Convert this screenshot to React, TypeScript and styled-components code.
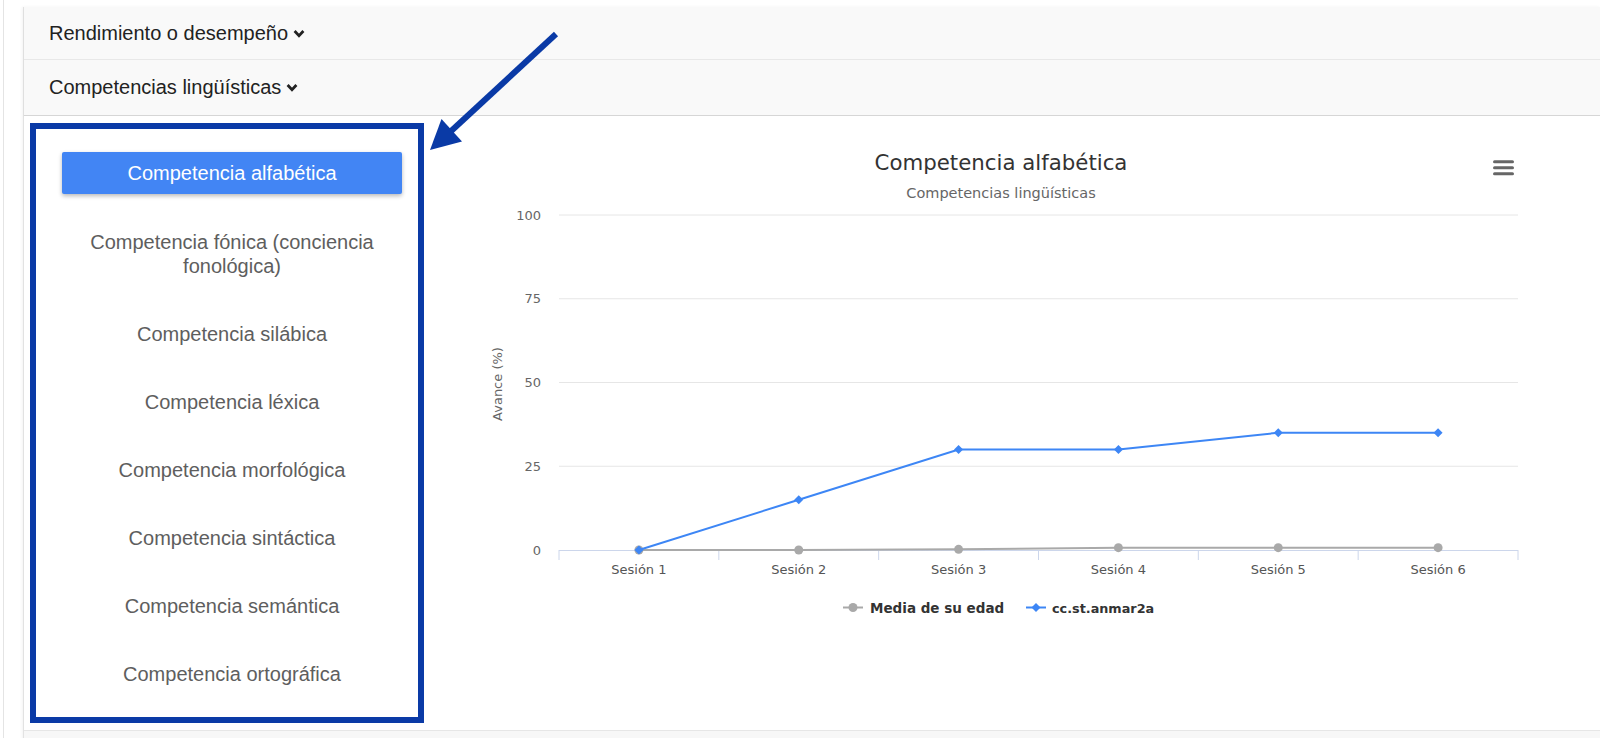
import React from "react";
import styled, { createGlobalStyle } from "styled-components";

const GlobalStyle = createGlobalStyle`
  html, body {
    margin: 0;
    padding: 0;
    background: #ffffff;
  }
  body {
    font-family: "Liberation Sans", Arial, sans-serif;
    overflow: hidden;
  }
`;

const Page = styled.div`
  position: relative;
  width: 1600px;
  height: 738px;
  overflow: hidden;
`;

const Frame = styled.div`
  margin-left: 3px;
  padding: 7px 0 0 19px;
  height: 100%;
  box-sizing: border-box;
  border-left: 1px solid #e4e4e4;
`;

const Panel = styled.section`
  border-left: 1px solid #e2e2e2;
  box-shadow: -1px 0 3px rgba(0, 0, 0, 0.05);
  background: #fff;
`;

const Header = styled.div<{ h: number; strong?: boolean }>`
  height: ${(p) => p.h}px;
  box-sizing: border-box;
  display: flex;
  align-items: center;
  gap: 5px;
  padding-left: 25px;
  background: #f9f9f9;
  border-bottom: 1px solid ${(p) => (p.strong ? "#d6d6d6" : "#e8e8e8")};
  box-shadow: 0 1px 2px rgba(0, 0, 0, 0.04);
  font-size: 20px;
  color: #222;
`;

const Body = styled.div`
  position: relative;
  height: 614px;
  display: flex;
  background: #fff;
`;

const Footer = styled.div`
  height: 20px;
  background: #f7f7f7;
  border-top: 1px solid #e6e6e6;
`;

const Nav = styled.ul`
  list-style: none;
  margin: 0 0 0 23px;
  padding: 36px 0 0;
  width: 370px;
  flex-shrink: 0;
`;

const NavItem = styled.li<{ active?: boolean }>`
  text-align: center;
  font-size: 20px;
  line-height: 24px;
  color: ${(p) => (p.active ? "#fff" : "#5e5e5e")};
  background: ${(p) => (p.active ? "#4285f4" : "transparent")};
  padding: ${(p) => (p.active ? "9px 10px" : "22px 40px")};
  margin: ${(p) => (p.active ? "0 15px 14px" : "0")};
  border-radius: ${(p) => (p.active ? "2px" : "0")};
  box-shadow: ${(p) => (p.active ? "0 2px 4px rgba(0,0,0,0.28)" : "none")};
`;

const Highlight = styled.div`
  position: absolute;
  left: 6px;
  top: 7px;
  width: 394px;
  height: 600px;
  box-sizing: border-box;
  border: 6px solid #0a3aa6;
  pointer-events: none;
`;

const ChartBox = styled.div`
  flex: 1;
  svg {
    display: block;
    font-family: "DejaVu Sans", "Lucida Grande", sans-serif;
  }
`;

const Annotation = styled.svg`
  position: absolute;
  left: 0;
  top: 0;
  pointer-events: none;
`;

const Chevron = () => (
  <svg width="12" height="9" viewBox="0 0 12 9">
    <polyline
      points="1.6,2 6,6.6 10.4,2"
      fill="none"
      stroke="#222"
      strokeWidth="2.8"
    />
  </svg>
);

const items = [
  "Competencia alfabética",
  "Competencia fónica (conciencia fonológica)",
  "Competencia silábica",
  "Competencia léxica",
  "Competencia morfológica",
  "Competencia sintáctica",
  "Competencia semántica",
  "Competencia ortográfica",
];

const plot = { left: 142, right: 1101, top: 99, bottom: 434 };
const catW = (plot.right - plot.left) / 6;
const cx = (i: number) => plot.left + catW * (i + 0.5);
const cy = (v: number) => plot.bottom - (v / 100) * (plot.bottom - plot.top);

const media = [0, 0, 0.2, 0.7, 0.7, 0.7];
const alumno = [0, 15, 30, 30, 35, 35];

const line = (data: number[]) =>
  data.map((v, i) => `${i ? "L" : "M"}${cx(i)},${cy(v)}`).join(" ");

const diamond = (x: number, y: number, r = 4.5) =>
  `${x},${y - r} ${x + r},${y} ${x},${y + r} ${x - r},${y}`;

function Chart() {
  const ticks = [0, 25, 50, 75, 100];
  return (
    <svg width="1183" height="600">
      <text x="584" y="54" textAnchor="middle" fontSize="21.3" fill="#333">
        Competencia alfabética
      </text>
      <text x="584" y="82" textAnchor="middle" fontSize="14.5" fill="#666">
        Competencias lingüísticas
      </text>

      <g stroke="#666" strokeWidth="3" strokeLinecap="round">
        <line x1="1077.5" y1="45.7" x2="1095.5" y2="45.7" />
        <line x1="1077.5" y1="51.7" x2="1095.5" y2="51.7" />
        <line x1="1077.5" y1="57.7" x2="1095.5" y2="57.7" />
      </g>

      {ticks.map((t) => (
        <g key={t}>
          {t > 0 && (
            <line
              x1={plot.left}
              x2={plot.right}
              y1={cy(t)}
              y2={cy(t)}
              stroke="#e6e6e6"
              strokeWidth="1"
            />
          )}
          <text x="124" y={cy(t) + 4.5} textAnchor="end" fontSize="13" fill="#666">
            {t}
          </text>
        </g>
      ))}

      <text
        transform="translate(84.5 268) rotate(-90)"
        textAnchor="middle"
        fontSize="13"
        fill="#666"
      >
        Avance (%)
      </text>

      <line
        x1={plot.left}
        x2={plot.right}
        y1={plot.bottom + 0.5}
        y2={plot.bottom + 0.5}
        stroke="#ccd6eb"
      />
      {Array.from({ length: 7 }).map((_, i) => (
        <line
          key={i}
          x1={plot.left + catW * i}
          x2={plot.left + catW * i}
          y1={plot.bottom}
          y2={plot.bottom + 10}
          stroke="#ccd6eb"
        />
      ))}
      {alumno.map((_, i) => (
        <text key={i} x={cx(i)} y="458" textAnchor="middle" fontSize="13" fill="#555">
          Sesión {i + 1}
        </text>
      ))}

      <path d={line(media)} fill="none" stroke="#a9a9a9" strokeWidth="2" />
      {media.map((v, i) => (
        <circle key={i} cx={cx(i)} cy={cy(v)} r="4.5" fill="#a9a9a9" />
      ))}
      <path d={line(alumno)} fill="none" stroke="#3d86f5" strokeWidth="2" />
      {alumno.map((v, i) => (
        <polygon key={i} points={diamond(cx(i), cy(v))} fill="#3d86f5" />
      ))}

      <g fontSize="13.5" fontWeight="bold" fill="#333">
        <line x1="426" x2="446" y1="491.5" y2="491.5" stroke="#a9a9a9" strokeWidth="2" />
        <circle cx="436" cy="491.5" r="4.5" fill="#a9a9a9" />
        <text x="453" y="496.5">Media de su edad</text>
        <line x1="609" x2="629" y1="491.5" y2="491.5" stroke="#3d86f5" strokeWidth="2" />
        <polygon points={diamond(619, 491.5)} fill="#3d86f5" />
        <text x="635" y="496.5" fontSize="12.8">cc.st.anmar2a</text>
      </g>
    </svg>
  );
}

export default function App() {
  return (
    <Page>
      <GlobalStyle />
      <Frame>
        <Panel>
          <Header h={53}>
            Rendimiento o desempeño <Chevron />
          </Header>
          <Header h={56} strong>
            Competencias lingüísticas <Chevron />
          </Header>
          <Body>
            <Nav>
              {items.map((label, i) => (
                <NavItem key={label} active={i === 0}>
                  {label}
                </NavItem>
              ))}
            </Nav>
            <ChartBox>
              <Chart />
            </ChartBox>
            <Highlight />
          </Body>
          <Footer />
        </Panel>
      </Frame>
      <Annotation width="600" height="200">
        <line x1="556" y1="34" x2="449" y2="133" stroke="#0a3aa6" strokeWidth="6" />
        <polygon points="430,150 441.5,119 462,141.5" fill="#0a3aa6" />
      </Annotation>
    </Page>
  );
}
